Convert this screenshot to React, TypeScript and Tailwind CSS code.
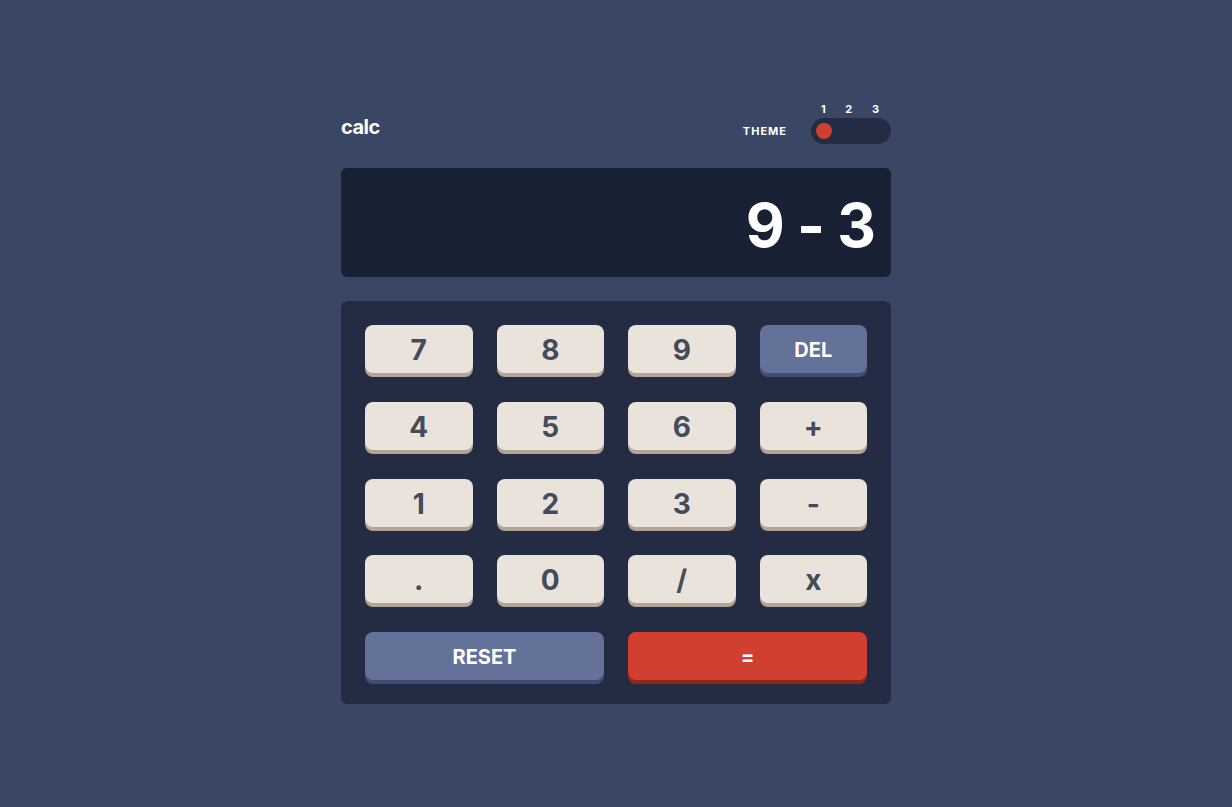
const keys = [
  { label: "7" },
  { label: "8" },
  { label: "9" },
  { label: "DEL", kind: "blue" },
  { label: "4" },
  { label: "5" },
  { label: "6" },
  { label: "+" },
  { label: "1" },
  { label: "2" },
  { label: "3" },
  { label: "-" },
  { label: "." },
  { label: "0" },
  { label: "/" },
  { label: "x" },
];

const Key = ({ label, kind }: { label: string; kind?: string }) => {
  if (kind === "blue") {
    return (
      <button className="h-12 rounded-lg bg-[#647198] text-white text-[20px] font-bold shadow-[0_4px_0_#414e73] flex items-center justify-center pt-[2px]">
        {label}
      </button>
    );
  }
  return (
    <button className="h-12 rounded-lg bg-[#eae3dc] text-[#444b5a] text-[28px] font-bold shadow-[0_4px_0_#b3a497] flex items-center justify-center pt-[2px]">
      {label}
    </button>
  );
};

export default function App() {
  return (
    <div className="min-h-screen w-full bg-[#3a4764] flex items-center justify-center font-['Inter',sans-serif]">
      <div className="w-[550px] flex flex-col">
        <header className="h-[41px] flex items-end justify-between">
          <h1 className="text-white text-[20px] font-bold leading-none tracking-[-0.5px] mb-[7px]">calc</h1>
          <div className="flex items-end gap-6">
            <span className="text-white text-[11px] font-bold tracking-[1px] leading-none mb-[7px]">THEME</span>
            <div className="flex flex-col w-20">
              <div className="flex justify-between pl-[10px] pr-[12px] text-white text-[11px] font-bold leading-none mb-[3px]">
                <span>1</span>
                <span>2</span>
                <span>3</span>
              </div>
              <div className="h-[26px] rounded-full bg-[#232c43] flex items-center px-[5px]">
                <div className="w-4 h-4 rounded-full bg-[#d03f2f]" />
              </div>
            </div>
          </div>
        </header>

        <div className="mt-6 h-[109px] rounded-md bg-[#182034] flex items-center justify-end px-4 pt-[4px]">
          <span className="text-white text-[60px] font-bold leading-none tracking-[-1px]">9 - 3</span>
        </div>

        <div className="mt-6 rounded-md bg-[#232c43] p-6 grid grid-cols-4 gap-x-6 gap-y-[28.75px]">
          {keys.map((k) => (
            <Key key={k.label} label={k.label} kind={k.kind} />
          ))}
          <button className="col-span-2 h-12 rounded-lg bg-[#647198] text-white text-[20px] font-bold shadow-[0_4px_0_#414e73] flex items-center justify-center pt-[2px]">
            RESET
          </button>
          <button className="col-span-2 h-12 rounded-lg bg-[#d03f2f] text-white text-[20px] font-bold shadow-[0_4px_0_#93261a] flex items-center justify-center pt-[2px]">
            =
          </button>
        </div>
      </div>
    </div>
  );
}
